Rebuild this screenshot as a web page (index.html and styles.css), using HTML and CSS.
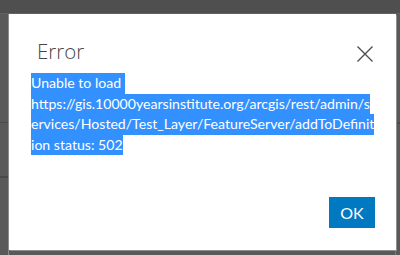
FILE: index.html
```html
<!DOCTYPE html>
<html>
<head>
<meta charset="utf-8">
<link rel="stylesheet" href="styles.css">
</head>
<body>
<div class="page">
  <div class="topbar"></div>
  <div class="row">
    <div class="side side-left"><div class="cell c1"></div><div class="cell c2"></div><div class="cell"></div></div>
    <div class="main"></div>
    <div class="side side-right"><div class="cell c1"></div><div class="cell"></div></div>
  </div>
</div>
<div class="modal">
  <div class="header">
    <h1 class="title">Error</h1>
    <svg class="close" width="18" height="18" viewBox="0 0 18 18"><path d="M1.5 1.5 L16.5 16.5 M16.5 1.5 L1.5 16.5" stroke="#4a4a4a" stroke-width="1.3" fill="none"/></svg>
  </div>
  <div class="content">
    <div class="sel">Unable to load&nbsp;</div>
    <div class="sel">https://gis.10000yearsinstitute.org/arcgis/rest/admin/s</div>
    <div class="sel">ervices/Hosted/Test_Layer/FeatureServer/addToDefinit</div>
    <div class="sel">ion status: 502</div>
  </div>
  <div class="footer">
    <button class="ok">OK</button>
  </div>
</div>
</body>
</html>
```

FILE: styles.css
```css
html, body { margin: 0; padding: 0; }
body { width: 400px; height: 255px; overflow: hidden; background: #595959; position: relative; font-family: Lato, "Open Sans", sans-serif; }
.page { display: flex; flex-direction: column; height: 255px; }
.topbar { height: 13px; background: #4f4f4f; border-bottom: 1px solid #616161; }
.row { flex: 1; display: flex; }
.side { display: flex; flex-direction: column; }
.side-left { width: 8px; border-right: 1px solid #8c8c8c; }
.side-right { width: 4px; margin-left: auto; border-left: 1px solid #7a7a7a; }
.main { flex: 1; }
.cell { border-bottom: 1px solid #4a4a4a; }
.side-left .c1 { height: 108px; }
.side-left .c2 { height: 53px; }
.side-right .c1 { height: 108px; }
.modal { position: absolute; left: 9px; top: 14px; width: 387px; height: 236px; background: #fff; box-shadow: 1px 1px 0 #8e8e8e; display: flex; flex-direction: column; box-sizing: border-box; }
.header { display: flex; align-items: flex-start; justify-content: space-between; padding: 24px 22px 0 28px; height: 35px; }
.title { margin: 0; font-family: "Open Sans", sans-serif; font-weight: 300; font-size: 20.5px; line-height: 26px; color: #474747; }
.close { margin-top: 7px; }
.content { padding: 0 22px 0 22px; font-family: Lato, sans-serif; font-size: 14.1px; line-height: 20.5px; color: #fff; }
.sel { background: #3390ff; width: fit-content; white-space: nowrap; }
.footer { margin-top: auto; display: flex; justify-content: flex-end; padding: 0 21px 22px 0; }
.ok { background: #0079c1; color: #fff; border: none; width: 46px; height: 31px; font-family: Lato, sans-serif; font-size: 16px; padding: 0; }
```
